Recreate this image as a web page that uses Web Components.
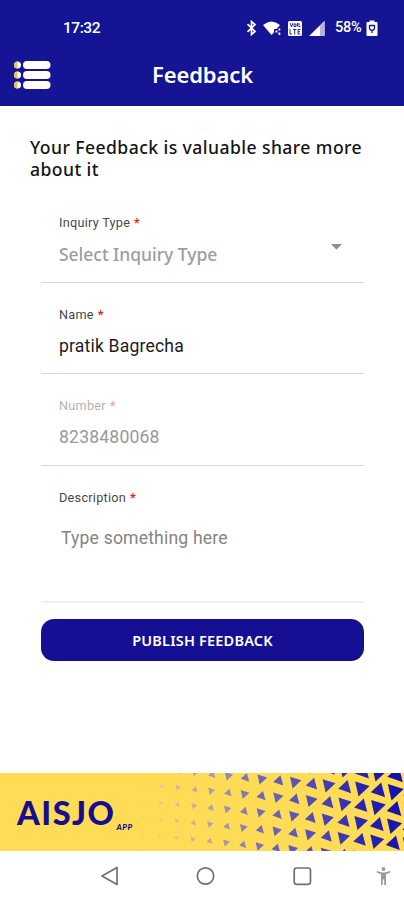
<!DOCTYPE html>
<html lang="en"><head><meta charset="utf-8"><title>Feedback</title>
<style>html,body{margin:0;background:#fff}body{width:404px;height:900px;overflow:hidden;font-family:"Noto Sans",sans-serif}</style></head>
<body>
<feedback-screen></feedback-screen>
<script>
const define=(name,html,setup)=>customElements.define(name,class extends HTMLElement{
  constructor(){super();const t=document.createElement('template');t.innerHTML=html;this.attachShadow({mode:'open'}).append(t.content.cloneNode(true));}
  connectedCallback(){if(setup)setup(this,this.shadowRoot);}
});

define('status-bar',`<style>
:host{display:flex;align-items:center;height:40px;padding:16px 25px 0 63px;box-sizing:border-box;color:#fff;font:500 15.5px/24px Roboto,sans-serif}
.time{flex:1;letter-spacing:-.45px}.pct{font-size:14.5px;letter-spacing:-.3px;margin-left:7px;margin-right:1px;width:28px;white-space:nowrap}svg{display:block;fill:#fff}
</style><span class="time">17:32</span>
<svg width="84" height="18" viewBox="0 0 84 18">
<path d="M3.500 5.200l7.500 7.300-3.500 3V2.500l3.500 3-7.500 7.300" fill="none" stroke="#fff" stroke-width="1.700"/>
<path d="M19 6Q27.500 -1 36 6L32.500 10H30V13.500L27.500 16Z"/><path d="M31.500 11.500h2v2h-2zM34.500 9.500h1.800v2h-1.800zM34.500 13.500h1.800v2.500h-1.800z"/>
<rect x="44" y="2" width="14" height="15" rx="1.500"/><path d="M46 4l1.500 4L49 4M50 5h2v2.500h-2zM53.500 4v3.500M55 4v3.500h1.500M46 10v5h2M49 10.500H52.500M50.700 10.500v5M56.500 10.500h-2.500v4.500H56.500M54 12.700h2" fill="none" stroke="#141494" stroke-width=".9"/>
<path d="M65 17L80.500 2v15z"/><path d="M76 6.400l4.500-4.400v15h-4.500z" fill="#b5b5dc"/></svg>
<span class="pct">58%</span>
<svg style="margin-left:2px;margin-right:1px" width="12" height="18" viewBox="0 0 12 18"><path d="M3.500 3V1.500h5V3h2q1 0 1 1v12q0 1-1 1h-9q-1 0-1-1V4q0-1 1-1z"/><path d="M3.500 6v3q0 2 2.500 2.500V14M8.500 6v3q0 2-2.500 2.500M3.500 6.500h5" fill="none" stroke="#141494" stroke-width="1.300"/></svg>`);

define('app-bar',`<style>
:host{display:grid;grid-template-columns:60px 1fr 60px;align-items:center;height:66px;padding-left:13px;padding-right:12px;box-sizing:border-box;color:#fff}
h1{margin:0;text-align:center;font:600 22px/30px "Noto Sans",sans-serif;letter-spacing:-.1px;padding-top:2px}svg{display:block;margin-top:4px}
</style><svg width="38" height="30" viewBox="0 0 38 30"><g fill="#fff"><rect x="10" y="1" width="27.500" height="8" rx="4"/><rect x="10" y="11" width="27.500" height="8" rx="4"/><rect x="10" y="21" width="27.500" height="8" rx="4"/><circle cx="4.500" cy="5" r="3.500"/><circle cx="4.500" cy="15" r="3.500"/><circle cx="4.500" cy="25" r="3.500"/></g><path d="M4.500 1.500a3.500 3.500 0 0 0 0 7zm0 10a3.500 3.500 0 0 0 0 7zm0 10a3.500 3.500 0 0 0 0 7z" fill="#e8c64c"/></svg><h1><slot></slot></h1>`);

define('form-field',`<style>
:host{display:block;box-sizing:border-box;height:91.500px;padding:23px 18px 0;border-bottom:1px solid #d6d6d6;font-family:Roboto,sans-serif}
:host([tall]){height:137px;border-bottom:2px solid #f0f0f0}
:host([disabled]) .label{opacity:.42}
.label{font-size:12.700px;line-height:18px;color:#484848;letter-spacing:.26px}b{color:#ee1c1c;font-weight:700;margin-left:.5px}
.row{display:flex;justify-content:space-between;margin-top:10px;font-size:17.600px;line-height:24px;color:#1c1c1c}
:host([disabled]) .row{color:#999}
:host([tall]) .row{margin-top:19px;padding-left:2px;color:#858585}
:host([select]) .row{color:#9d9d9d;font:500 17.500px/24px "Noto Sans",sans-serif}
svg{display:none;margin:2px 4px 0 0}:host([select]) svg{display:block}
</style><div class="label"><span></span> <b>*</b></div><div class="row"><span class="value"><slot></slot></span><svg width="11" height="6"><path d="M0 0h11L5.500 5.700z" fill="#909090"/></svg></div>`,
(e,r)=>{r.querySelector('.label span').textContent=e.getAttribute('label');r.querySelector('.value').style.letterSpacing=e.getAttribute('tracking')||'0';});

define('submit-button',`<style>:host{display:block}button{display:block;width:100%;height:42px;border:0;border-radius:13px;background:#151093;color:#fff;font:600 14.500px/42px "Noto Sans",sans-serif;padding:0;letter-spacing:.2px}</style><button><slot></slot></button>`);

define('brand-banner',`<style>
:host{display:grid;height:78px;background:#fedc56;overflow:hidden;color:#160d91}
svg,.brand{grid-area:1/1}.brand{display:flex;align-items:flex-start;padding:20px 0 0 17px}
.logo{font:900 32.500px/40px Lato,sans-serif;letter-spacing:1.500px}.app{font:italic 900 8px/10px Lato,sans-serif;letter-spacing:.5px;margin:29px 0 0 1px}
</style><svg width="404" height="78"></svg><div class="brand"><span class="logo">AISJO</span><span class="app">APP</span></div>`,
(e,r)=>{
  const stops=[[0,[240,212,110]],[1,[222,203,150]],[4,[172,158,172]],[7,[112,104,184]],[10,[84,76,184]],[13,[42,36,176]],[16,[16,14,170]]];
  const tone=c=>{c=Math.max(0,Math.min(16,c));let i=0;while(i<stops.length-2&&c>stops[i+1][0])i++;
    const [a,p]=stops[i],[b,q]=stops[i+1],t=(c-a)/(b-a);return 'rgb('+p.map((v,k)=>Math.round(v+(q[k]-v)*t)).join(',')+')';};
  let s='';
  for(let c=0;c<17;c++)for(let j=-3;j<5;j++){
    const x=144.800+16.650*c-.6*j,y=11.600+1.620*c+(16.500+.04*c)*j;
    if(y<-8||y>86)continue;
    const z=Math.max(1.900,2.100+.39*c-j*.2);
    const up=(c+j)%2!==0;
    const pts=up?[[-1,.25],[.35,-1],[.85,.9]]:[[-.9,-.95],[1.050,-.35],[-.45,1.050]];
    s+='<polygon points="'+pts.map(p=>(x+p[0]*z).toFixed(1)+','+(y+p[1]*z).toFixed(1)).join(' ')+'" fill="'+tone(c-j*.2)+'"/>';
  }
  r.querySelector('svg').innerHTML=s;
});

define('nav-bar',`<style>:host{display:block;height:49px}svg{display:block}</style>
<svg width="404" height="49" fill="none" stroke="#707070" stroke-width="1.700"><path d="M102 25l15-8.500v17z" stroke-linejoin="round"/><circle cx="205.500" cy="25" r="8.200"/><rect x="294.200" y="17" width="16.300" height="16.300" rx="2.500"/><g fill="#999" stroke="none"><circle cx="383.500" cy="18" r="1.900"/><path d="M377 20l5 1.500h3l5-1.500.3 1.500-4.300 1.700V34h-1.800v-5.500h-1.500V34H381V23.200L376.700 21.500z"/></g></svg>`);

define('feedback-screen',`<style>
:host{display:flex;flex-direction:column;height:900px;background:#fff}
header{background:#141494;height:106px}main{flex:1;min-height:0}
h2{margin:0;padding:30px 30px 0;font:500 17.600px/22px "Noto Sans",sans-serif;color:#151515;letter-spacing:.42px;white-space:nowrap}
form{display:block;margin:0 40px 0 41px;padding-top:11px}submit-button{margin-top:16px}
</style><header><status-bar></status-bar><app-bar>Feedback</app-bar></header>
<main><h2>Your Feedback is valuable share more<br>about it</h2><form>
<form-field select label="Inquiry Type" tracking="-.03px">Select Inquiry Type</form-field>
<form-field label="Name" tracking=".17px">pratik Bagrecha</form-field>
<form-field disabled label="Number" tracking=".18px">8238480068</form-field>
<form-field tall label="Description" tracking=".17px">Type something here</form-field>
<submit-button>PUBLISH FEEDBACK</submit-button></form></main>
<brand-banner></brand-banner><nav-bar></nav-bar>`);
</script></body></html>
